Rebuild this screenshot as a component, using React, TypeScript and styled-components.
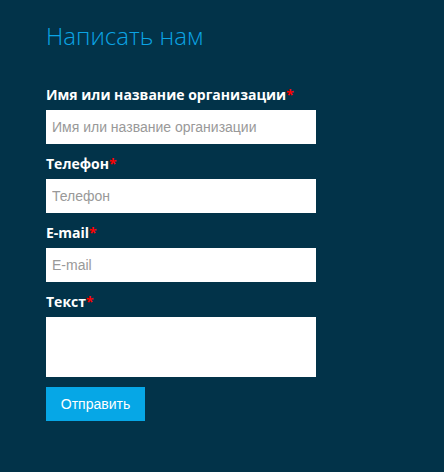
import React from 'react';
import styled, {createGlobalStyle} from 'styled-components';

const GlobalStyle = createGlobalStyle`
  html, body {
    margin: 0;
    padding: 0;
    background-color: #023349;
  }
`;

const Page = styled.div`
  min-height: 472px;
  background-color: #023349;
  padding: 21px 46px 0;
  box-sizing: border-box;
`;

const Title = styled.h2`
  font-family: 'Open Sans', sans-serif;
  font-weight: 300;
  font-size: 24px;
  line-height: 29px;
  color: #0ba4e4;
  margin: 0 0 35px;
`;

const Form = styled.form`
  display: flex;
  flex-direction: column;
  width: 270px;
`;

const Field = styled.div`
  display: flex;
  flex-direction: column;
  margin-bottom: 10px;
`;

const Label = styled.label`
  font-family: 'Open Sans', sans-serif;
  font-weight: 700;
  font-size: 14px;
  line-height: 20px;
  color: #fff;
  margin-bottom: 5px;
`;

const Required = styled.span`
  color: #ff0000;
`;

const Input = styled.input`
  box-sizing: border-box;
  width: 100%;
  height: 34px;
  border: none;
  outline: none;
  padding: 0 6px;
  font-family: 'Liberation Sans', Arial, sans-serif;
  font-size: 14px;
  color: #333;
  background: #fff;

  &::placeholder {
    color: #999;
  }
`;

const TextArea = styled.textarea`
  box-sizing: border-box;
  width: 100%;
  height: 60px;
  border: none;
  outline: none;
  padding: 6px;
  resize: none;
  display: block;
  font-family: 'Liberation Sans', Arial, sans-serif;
  font-size: 14px;
  background: #fff;
`;

const SubmitButton = styled.button`
  align-self: flex-start;
  width: 99px;
  height: 34px;
  border: none;
  background-color: #06a7e6;
  color: #fff;
  font-family: 'Liberation Sans', Arial, sans-serif;
  font-size: 14px;
  cursor: pointer;
`;

const fields = [
  {name: 'name', label: 'Имя или название организации'},
  {name: 'phone', label: 'Телефон'},
  {name: 'email', label: 'E-mail'},
];

export default function App() {
  return (
    <Page>
      <GlobalStyle />
      <Title>Написать нам</Title>
      <Form onSubmit={e => e.preventDefault()}>
        {fields.map(({name, label}) => (
          <Field key={name}>
            <Label htmlFor={name}>
              {label}
              <Required>*</Required>
            </Label>
            <Input id={name} placeholder={label} />
          </Field>
        ))}
        <Field>
          <Label htmlFor="text">
            Текст<Required>*</Required>
          </Label>
          <TextArea id="text" />
        </Field>
        <SubmitButton type="submit">Отправить</SubmitButton>
      </Form>
    </Page>
  );
}
